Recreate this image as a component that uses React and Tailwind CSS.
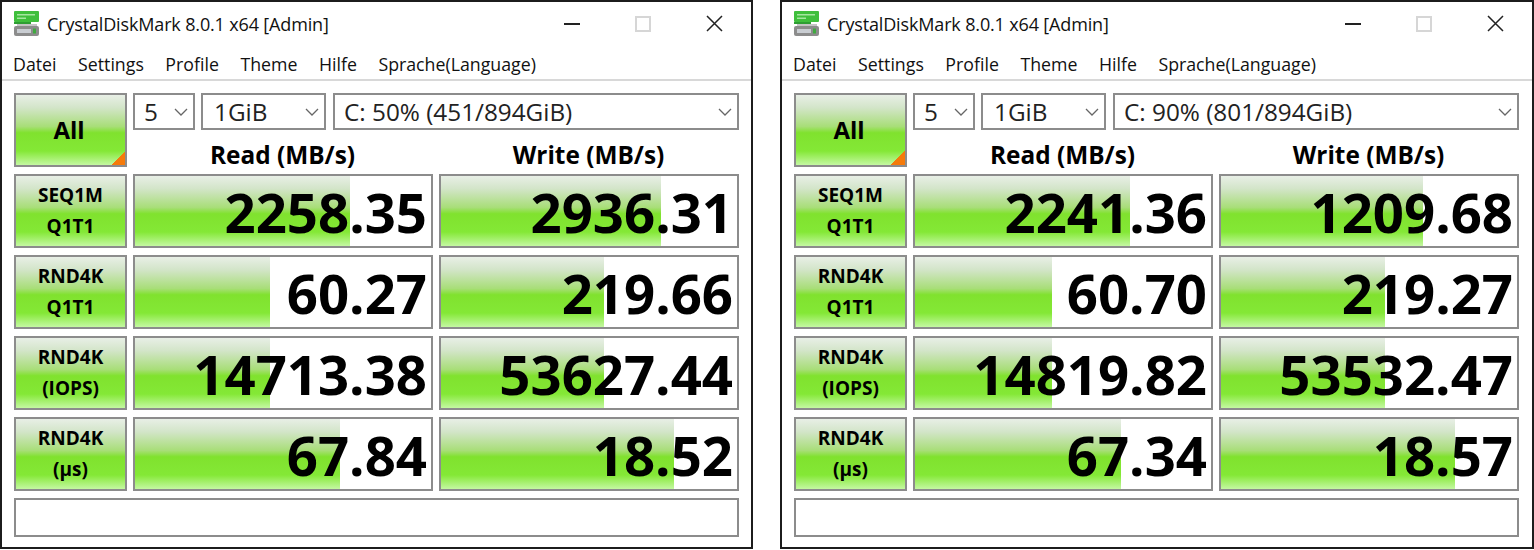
import React from "react";

const FONT = "font-['Open_Sans','Noto_Sans',sans-serif]";
const GREEN = "bg-[linear-gradient(180deg,#e8efe6_0%,#d3e5c9_18%,#a8de78_45%,#80e22e_54%,#84e836_80%,#c4f8a2_100%)]";

function Chevron() {
  return (
    <svg width="14" height="8" viewBox="0 0 14 8" fill="none" className="shrink-0">
      <path d="M1 1l6 6 6-6" stroke="#666" strokeWidth="1.3" />
    </svg>
  );
}

function AppIcon() {
  return (
    <svg width="26" height="25" viewBox="0 0 26 25" className="shrink-0">
      <rect x="0" y="0" width="25" height="11" rx="1" fill="#3fbf3c" />
      <rect x="3" y="3" width="18" height="1.5" fill="#a5e6a0" />
      <rect x="3" y="6.5" width="9" height="1.5" fill="#a5e6a0" />
      <rect x="0" y="11" width="17" height="2" fill="#2e9e33" />
      <rect x="3" y="13" width="20" height="2" fill="#c4c4c4" />
      <rect x="0" y="15" width="25" height="10" rx="2" fill="#8c8c8c" />
      <rect x="3" y="18" width="14" height="4" fill="#c9cdd2" />
      <rect x="19" y="17.5" width="3" height="5" fill="#3faa3f" />
    </svg>
  );
}

function Select({ w, label, pad }) {
  return (
    <div className={`${w} ${pad} h-[37px] border-2 border-[#8c8c8c] bg-white flex items-center justify-between pr-[5px]`}>
      <span className="pt-[2px] text-[24.3px] leading-none text-[#222]">{label}</span>
      <Chevron />
    </div>
  );
}

function Label({ a, b }) {
  return (
    <div className={`w-[113px] h-[74px] border-2 border-[#8c8c8c] ${GREEN} flex flex-col items-center justify-center gap-[9px] pb-[1px] text-[19px] font-bold leading-[22px] text-black`}>
      <span>{a}</span>
      <span>{b}</span>
    </div>
  );
}

function Value({ text, fill }) {
  return (
    <div className="relative w-[300px] h-[74px] border-2 border-[#8c8c8c] bg-white flex items-center justify-end pr-[4px]">
      <div className={`absolute left-0 top-0 bottom-0 ${GREEN}`} style={{ width: fill }} />
      <span className="relative top-[1px] text-[54.5px] font-bold leading-none text-black">{text}</span>
    </div>
  );
}

function CdmWindow({ width, drive, rows }) {
  return (
    <div className={`${width} h-[549px] border-2 border-[#1c1c1c] bg-white flex flex-col ${FONT}`}>
      <div className="h-[42px] flex items-center pl-[12px] pt-[1px] shrink-0">
        <AppIcon />
        <span className="ml-[7px] text-[18px] leading-none text-[#111] tracking-[-0.15px]">CrystalDiskMark 8.0.1 x64 [Admin]</span>
        <div className="ml-auto flex items-center gap-[55px] pr-[28px]">
          <div className="w-[16px] h-[2px] bg-[#222]" />
          <div className="w-[16px] h-[16px] border-2 border-[#d6d6d6]" />
          <svg width="17" height="17" viewBox="0 0 17 17" fill="none">
            <path d="M1 1l15 15M16 1L1 16" stroke="#222" strokeWidth="1.5" />
          </svg>
        </div>
      </div>
      <div className="h-[37px] flex items-center gap-[21.5px] pl-[11px] pt-[6px] text-[17.75px] leading-none text-[#111] border-b-2 border-[#d8d8d8] shrink-0">
        <span>Datei</span>
        <span>Settings</span>
        <span>Profile</span>
        <span>Theme</span>
        <span>Hilfe</span>
        <span>Sprache(Language)</span>
      </div>
      <div className="flex-1 flex flex-col pl-[12px] pt-[12px] gap-[7px]">
        <div className="flex gap-[6px]">
          <div className={`relative w-[113px] h-[74px] border-2 border-[#8c8c8c] ${GREEN} flex items-center justify-center pr-[3px] text-[24px] font-bold text-black`}>
            All
            <div className="absolute right-0 bottom-0 w-[14px] h-[14px] bg-[linear-gradient(135deg,transparent_50%,#f57a0a_50%)]" />
          </div>
          <div className="flex flex-col">
            <div className="flex">
              <Select w="w-[62px]" pad="pl-[9px]" label="5" />
              <div className="w-[6px]" />
              <Select w="w-[125px]" pad="pl-[11px]" label="1GiB" />
              <div className="w-[7px]" />
              <Select w="w-[406px]" pad="pl-[9px]" label={drive} />
            </div>
            <div className="flex gap-[6px] h-[37px] items-center pt-[13px] text-[24.4px] font-bold leading-none text-black">
              <div className="w-[300px] text-center pr-[1px]">Read (MB/s)</div>
              <div className="w-[300px] text-center pr-[1px]">Write (MB/s)</div>
            </div>
          </div>
        </div>
        {rows.map((r) => (
          <div key={r.a + r.b} className="flex gap-[6px]">
            <Label a={r.a} b={r.b} />
            <Value text={r.read} fill={r.rf} />
            <Value text={r.write} fill={r.wf} />
          </div>
        ))}
        <div className="w-[725px] h-[39px] border-2 border-[#8c8c8c] bg-white" />
      </div>
    </div>
  );
}

const left = [
  { a: "SEQ1M", b: "Q1T1", read: "2258.35", rf: 215, write: "2936.31", wf: 220 },
  { a: "RND4K", b: "Q1T1", read: "60.27", rf: 135, write: "219.66", wf: 163 },
  { a: "RND4K", b: "(IOPS)", read: "14713.38", rf: 135, write: "53627.44", wf: 163 },
  { a: "RND4K", b: "(µs)", read: "67.84", rf: 205, write: "18.52", wf: 233 },
];
const right = [
  { a: "SEQ1M", b: "Q1T1", read: "2241.36", rf: 215, write: "1209.68", wf: 202 },
  { a: "RND4K", b: "Q1T1", read: "60.70", rf: 137, write: "219.27", wf: 164 },
  { a: "RND4K", b: "(IOPS)", read: "14819.82", rf: 137, write: "53532.47", wf: 164 },
  { a: "RND4K", b: "(µs)", read: "67.34", rf: 206, write: "18.57", wf: 234 },
];

export default function App() {
  return (
    <div className="w-[1534px] h-[550px] bg-white flex gap-[27px] overflow-hidden">
      <CdmWindow width="w-[753px]" drive="C: 50% (451/894GiB)" rows={left} />
      <CdmWindow width="w-[754px]" drive="C: 90% (801/894GiB)" rows={right} />
    </div>
  );
}
